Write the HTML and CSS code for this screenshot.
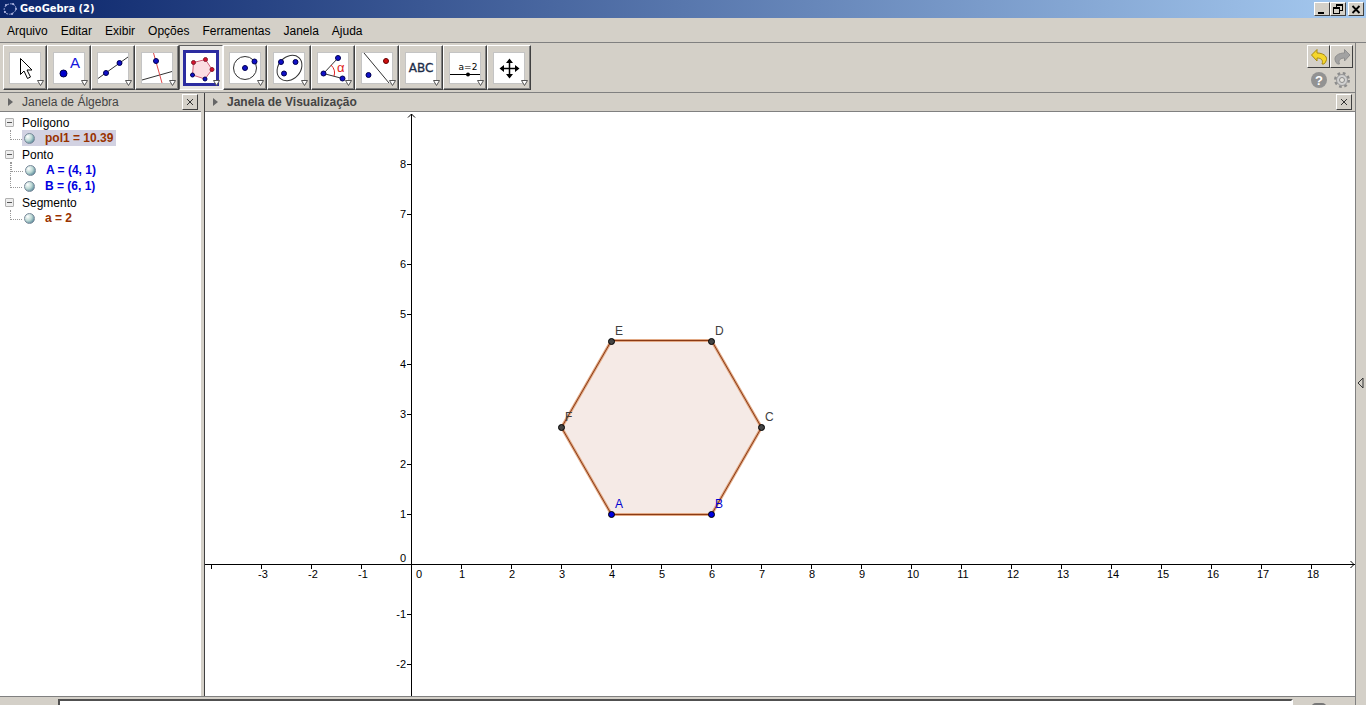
FILE: index.html
```html
<!DOCTYPE html>
<html lang="pt-BR">
<head>
<meta charset="utf-8">
<title>GeoGebra (2)</title>
<link rel="stylesheet" href="styles.css">
</head>
<body>
<header class="titlebar">
  <svg class="app-icon" width="16" height="16" viewBox="0 0 16 16" aria-hidden="true">
    <ellipse cx="8" cy="8" rx="6" ry="5" fill="none" stroke="#8f9ccc" stroke-dasharray="2 1" transform="rotate(-20 8 8)"/>
    <g fill="#b9bde8"><circle cx="4" cy="4" r="1"/><circle cx="11" cy="3" r="1"/><circle cx="14" cy="8" r="1"/><circle cx="10" cy="13" r="1"/><circle cx="3" cy="11" r="1"/></g>
  </svg>
  <h1 class="app-title">GeoGebra (2)</h1>
  <div class="window-buttons">
    <button class="win-btn" aria-label="Minimizar"><svg width="12" height="11" viewBox="0 0 12 11"><path d="M2 8h6v2H2z"/></svg></button>
    <button class="win-btn" aria-label="Restaurar"><svg width="12" height="11" viewBox="0 0 12 11"><path d="M4 0h7v7H8V6h2V2H5v1H4zM1 3h7v7H1zM2 5v4h5V5z" fill-rule="evenodd"/></svg></button>
    <button class="win-btn win-close" aria-label="Fechar"><svg width="12" height="11" viewBox="0 0 12 11"><path d="M2.500 2l7 7M9.500 2l-7 7" stroke="#000" stroke-width="1.800"/></svg></button>
  </div>
</header>
<nav class="menubar">
  <button class="menu">Arquivo</button>
  <button class="menu">Editar</button>
  <button class="menu">Exibir</button>
  <button class="menu">Opções</button>
  <button class="menu">Ferramentas</button>
  <button class="menu">Janela</button>
  <button class="menu">Ajuda</button>
</nav>
<div class="workspace">
  <main class="main">
    <div class="toolbar">
      <div class="tools">
        <button class="tool" aria-label="Mover"><svg class="tool-icon" viewBox="0 0 38 38">
          <rect class="tile" x="3.500" y="3.500" width="31" height="31"/>
          <path d="M14.500 9.500v16l3.500-3.500 3.500 7.500 3-1.500-3.500-7h5z" fill="#fff" stroke="#000"/>
          <path class="drop" d="M31.500 31.500h6l-3 5z"/></svg></button>
        <button class="tool" aria-label="Ponto"><svg class="tool-icon" viewBox="0 0 38 38">
          <rect class="tile" x="3.500" y="3.500" width="31" height="31"/>
          <circle cx="13.500" cy="24.500" r="3.500" fill="#00c" stroke="#004"/>
          <text x="20" y="19" class="tool-a">A</text>
          <path class="drop" d="M31.500 31.500h6l-3 5z"/></svg></button>
        <button class="tool" aria-label="Reta"><svg class="tool-icon" viewBox="0 0 38 38">
          <rect class="tile" x="3.500" y="3.500" width="31" height="31"/>
          <path d="M4 29.500L34 8" stroke="#333"/>
          <g class="blue-dot"><circle cx="12" cy="24" r="2.500"/><circle cx="25.500" cy="14" r="2.500"/></g>
          <path class="drop" d="M31.500 31.500h6l-3 5z"/></svg></button>
        <button class="tool" aria-label="Reta perpendicular"><svg class="tool-icon" viewBox="0 0 38 38">
          <rect class="tile" x="3.500" y="3.500" width="31" height="31"/>
          <path d="M4 31l30-8.500" stroke="#333"/><path d="M15.500 4l8.500 30" stroke="#e04848"/>
          <circle class="blue-dot" cx="18" cy="12" r="2.500"/>
          <path class="drop" d="M31.500 31.500h6l-3 5z"/></svg></button>
        <button class="tool tool-active" aria-label="Polígono" aria-pressed="true"><svg class="tool-icon" viewBox="0 0 38 38">
          <rect x="2.500" y="2.500" width="33" height="33" fill="#fff" stroke="#2c2ca0" stroke-width="3"/>
          <path d="M11.500 13.500L23.500 10.500 30 20.500 23 30 10.500 26z" fill="#fbdde2" stroke="#d06078"/>
          <g fill="#d8102c" stroke="#802030"><circle cx="11.500" cy="13.500" r="2"/><circle cx="23.500" cy="10.500" r="2"/><circle cx="30" cy="20.500" r="2"/></g>
          <g class="blue-dot"><circle cx="23" cy="30" r="2"/><circle cx="10.500" cy="26" r="2"/></g>
          <path class="drop" d="M31.500 31.500h6l-3 5z"/></svg></button>
        <button class="tool" aria-label="Círculo"><svg class="tool-icon" viewBox="0 0 38 38">
          <rect class="tile" x="3.500" y="3.500" width="31" height="31"/>
          <circle cx="19" cy="19" r="11.500" fill="none" stroke="#333"/>
          <g class="blue-dot"><circle cx="19" cy="19" r="2.500"/><circle cx="28.500" cy="12.500" r="2.500"/></g>
          <path class="drop" d="M31.500 31.500h6l-3 5z"/></svg></button>
        <button class="tool" aria-label="Elipse"><svg class="tool-icon" viewBox="0 0 38 38">
          <rect class="tile" x="3.500" y="3.500" width="31" height="31"/>
          <ellipse cx="19.500" cy="19" rx="14" ry="11" fill="none" stroke="#333" transform="rotate(-48 19.500 19)"/>
          <g class="blue-dot"><circle cx="11" cy="13" r="2.500"/><circle cx="25.500" cy="13" r="2.500"/><circle cx="14" cy="24.500" r="2.500"/></g>
          <path class="drop" d="M31.500 31.500h6l-3 5z"/></svg></button>
        <button class="tool" aria-label="Ângulo"><svg class="tool-icon" viewBox="0 0 38 38">
          <rect class="tile" x="3.500" y="3.500" width="31" height="31"/>
          <path d="M24 9L9.500 24.500 28.500 29.500" fill="none" stroke="#333"/>
          <path d="M17 16q5 5 3 11" fill="none" stroke="#e02020"/>
          <text x="23" y="23" class="tool-alpha">α</text>
          <g class="blue-dot"><circle cx="24" cy="9" r="2.500"/><circle cx="9.500" cy="24.500" r="2.500"/><circle cx="28.500" cy="29.500" r="2.500"/></g>
          <path class="drop" d="M31.500 31.500h6l-3 5z"/></svg></button>
        <button class="tool" aria-label="Reflexão"><svg class="tool-icon" viewBox="0 0 38 38">
          <rect class="tile" x="3.500" y="3.500" width="31" height="31"/>
          <path d="M6 4l25 30" stroke="#333"/>
          <circle cx="28" cy="12" r="2.500" fill="#d01010" stroke="#600"/><circle class="blue-dot" cx="10.500" cy="26" r="2.500"/>
          <path class="drop" d="M31.500 31.500h6l-3 5z"/></svg></button>
        <button class="tool" aria-label="Texto"><svg class="tool-icon" viewBox="0 0 38 38">
          <rect class="tile" x="3.500" y="3.500" width="31" height="31"/>
          <text x="19" y="23" class="tool-abc">ABC</text>
          <path class="drop" d="M31.500 31.500h6l-3 5z"/></svg></button>
        <button class="tool" aria-label="Controle deslizante"><svg class="tool-icon" viewBox="0 0 38 38">
          <rect class="tile" x="3.500" y="3.500" width="31" height="31"/>
          <text x="22" y="21" class="tool-slider">a=2</text>
          <path d="M4 25.500h30" stroke="#000"/><circle cx="22" cy="25.500" r="2"/>
          <path class="drop" d="M31.500 31.500h6l-3 5z"/></svg></button>
        <button class="tool" aria-label="Mover janela de visualização"><svg class="tool-icon" viewBox="0 0 38 38">
          <rect class="tile" x="3.500" y="3.500" width="31" height="31"/>
          <path d="M19.500 11v17M11 19.500h17" stroke="#000" stroke-width="1.500"/>
          <path d="M19.500 9.500l3.500 4.500h-7zM19.500 29.500l3.500-4.500h-7zM9.500 19.500l4.500-3.500v7zM29.500 19.500l-4.500-3.500v7z"/>
          <path class="drop" d="M31.500 31.500h6l-3 5z"/></svg></button>
      </div>
      <div class="actions">
        <button class="action" aria-label="Desfazer"><svg width="18" height="18" viewBox="0 0 18 18"><path d="M1.500 7L7 1.500V5c6 0 10 3 9.500 6.500-.3 2-1.500 3.500-2.500 4.500h-2c1.500-4-1-6-5-6v3z" fill="#f5d62c" stroke="#a88a10"/></svg></button>
        <button class="action" aria-label="Refazer"><svg width="18" height="18" viewBox="0 0 18 18"><path d="M17 7L11.500 1.500V5C5.500 5 1.500 8 2 11.500c.3 2 1.500 3.500 2.500 4.500h2C5 12 7.500 10 11.500 10v3z" fill="#a2a2a2" stroke="#8e8e8e"/></svg></button>
        <button class="action action-flat" aria-label="Ajuda"><svg width="18" height="18" viewBox="0 0 18 18"><circle cx="9" cy="9" r="8" fill="#929292"/><text x="9" y="14" class="help-mark">?</text></svg></button>
        <button class="action action-flat" aria-label="Preferências"><svg width="18" height="18" viewBox="0 0 18 18"><circle cx="9" cy="9" r="6.500" fill="none" stroke="#8c8c8c" stroke-width="3" stroke-dasharray="2.600 2.500"/><circle cx="9" cy="9" r="5.500" fill="#d0d0d0" stroke="#9a9a9a"/><circle cx="9" cy="9" r="2.500" fill="#e4e2dc" stroke="#8c8c8c"/></svg></button>
      </div>
    </div>
    <div class="views">
      <section class="view algebra">
        <header class="view-head">
          <svg class="expander" width="5" height="8" viewBox="0 0 5 8"><path d="M0 0l5 4-5 4z"/></svg>
          <h2 class="view-title">Janela de Álgebra</h2>
          <button class="view-close" aria-label="Fechar"><svg width="8" height="8" viewBox="0 0 8 8"><path d="M1 1l6 6M7 1L1 7"/></svg></button>
        </header>
        <ul class="tree">
          <li><button class="group"><span class="toggle"></span>Polígono</button>
            <ul class="leaves"><li class="leaf"><button class="object selected brown"><span class="ball"></span>pol1 = 10.39</button></li></ul></li>
          <li><button class="group"><span class="toggle"></span>Ponto</button>
            <ul class="leaves"><li class="leaf"><button class="object blue"><span class="ball"></span>A = (4, 1)</button></li>
            <li class="leaf"><button class="object blue"><span class="ball"></span>B = (6, 1)</button></li></ul></li>
          <li><button class="group"><span class="toggle"></span>Segmento</button>
            <ul class="leaves"><li class="leaf"><button class="object brown"><span class="ball"></span>a = 2</button></li></ul></li>
        </ul>
      </section>
      <section class="view graphics">
        <header class="view-head">
          <svg class="expander" width="5" height="8" viewBox="0 0 5 8"><path d="M0 0l5 4-5 4z"/></svg>
          <h2 class="view-title view-title-active">Janela de Visualização</h2>
          <button class="view-close" aria-label="Fechar"><svg width="8" height="8" viewBox="0 0 8 8"><path d="M1 1l6 6M7 1L1 7"/></svg></button>
        </header>
        <div class="plot">
        <svg class="canvas" role="img" aria-label="Hexágono regular ABCDEF">
          <g class="axes">
            <line x1="0" y1="452.500" x2="100%" y2="452.500"/>
            <line x1="206.500" y1="2" x2="206.500" y2="100%"/>
            <path d="M203 5.500l3.500-3.500 3.500 3.500"/>
            <svg x="100%" y="452" overflow="visible"><path d="M-4.500-3L-1 .5-4.500 4"/></svg>
            <path d="M6.500 453v4m50-4v4m50-4v4m50-4v4m100-4v4m50-4v4m50-4v4m50-4v4m50-4v4m50-4v4m50-4v4m50-4v4m50-4v4m50-4v4m50-4v4m50-4v4m50-4v4m50-4v4m50-4v4m50-4v4m50-4v4m50-4v4"/>
            <path d="M202 52.500h4m-4 50h4m-4 50h4m-4 50h4m-4 50h4m-4 50h4m-4 50h4m-4 50h4m-4 100h4m-4 50h4"/>
          </g>
          <g class="x-labels">
            <text x="58" y="466">-3</text><text x="108" y="466">-2</text><text x="158" y="466">-1</text><text x="214" y="466">0</text>
            <text x="257" y="466">1</text><text x="307" y="466">2</text><text x="357" y="466">3</text><text x="407" y="466">4</text><text x="457" y="466">5</text><text x="507" y="466">6</text><text x="557" y="466">7</text><text x="607" y="466">8</text><text x="657" y="466">9</text>
            <text x="708" y="466">10</text><text x="758" y="466">11</text><text x="808" y="466">12</text><text x="858" y="466">13</text><text x="908" y="466">14</text><text x="958" y="466">15</text><text x="1008" y="466">16</text><text x="1058" y="466">17</text><text x="1108" y="466">18</text>
          </g>
          <g class="y-labels">
            <text x="201" y="56">8</text><text x="201" y="106">7</text><text x="201" y="156">6</text><text x="201" y="206">5</text><text x="201" y="256">4</text><text x="201" y="306">3</text><text x="201" y="356">2</text><text x="201" y="406">1</text><text x="201" y="450">0</text><text x="201" y="506">-1</text><text x="201" y="556">-2</text>
          </g>
          <path class="hexagon-halo" d="M406.500 402.500h100l50-87-50-87h-100l-50 87z"/>
          <path class="hexagon-edge" d="M406.500 402.500h100l50-87-50-87h-100l-50 87z"/>
          <g class="derived"><circle cx="556.500" cy="315.500" r="3"/><circle cx="506.500" cy="229.500" r="3"/><circle cx="406.500" cy="229.500" r="3"/><circle cx="356.500" cy="315.500" r="3"/></g>
          <g class="free"><circle cx="406.500" cy="402.500" r="3"/><circle cx="506.500" cy="402.500" r="3"/></g>
          <g class="point-labels">
            <text x="410" y="223">E</text><text x="510" y="223">D</text><text x="560" y="309">C</text><text x="360" y="309">F</text>
          </g>
          <g class="point-labels free-labels"><text x="410" y="396">A</text><text x="510" y="396">B</text></g>
        </svg>
        </div>
      </section>
    </div>
    <footer class="inputbar">
      <input class="command" type="text" aria-label="Entrada">
      <button class="input-help" aria-label="Ajuda de comandos"></button>
    </footer>
  </main>
  <aside class="sidebar">
    <button class="sidebar-open" aria-label="Abrir painel"><svg width="7" height="12" viewBox="0 0 7 12"><path d="M6 1v10L1 6z" fill="none" stroke="#333"/></svg></button>
  </aside>
</div>
</body>
</html>
```
FILE: styles.css
```css
* { box-sizing: border-box; }

body {
  display: flex;
  flex-direction: column;
  height: 100vh;
  margin: 0;
  overflow: hidden;
  background: #d4d0c8;
  color: #000;
  font: 12px/16px "Liberation Sans", Arial, sans-serif;
}

button {
  margin: 0;
  padding: 0;
  border: 0;
  background: none;
  color: inherit;
  font: inherit;
}

h1, h2, ul { margin: 0; padding: 0; }
ul { list-style: none; }
svg { display: block; }

/* Title bar */
.titlebar {
  display: flex;
  align-items: center;
  flex: none;
  height: 18px;
  padding: 0 2px;
  background: linear-gradient(to right, #0a246a, #a6caf0);
}
.app-title {
  flex: 1;
  padding-left: 2px;
  color: #fff;
  font: bold 11px/16px "DejaVu Sans Condensed", "Noto Sans", sans-serif;
}
.window-buttons { display: flex; }
.win-btn {
  display: flex;
  width: 16px;
  height: 14px;
  padding: 1px;
  border: 1px solid;
  border-color: #fff #404040 #404040 #fff;
  background: #d4d0c8;
}
.win-close { margin-left: 2px; }

/* Menu bar */
.menubar {
  display: flex;
  align-items: center;
  flex: none;
  gap: 13px;
  height: 25px;
  padding: 1px 7px 0;
  border-bottom: 1px solid #808080;
}

.workspace { display: flex; flex: 1; min-height: 0; }
.main { display: flex; flex: 1; flex-direction: column; min-width: 0; }

/* Toolbar */
.toolbar {
  display: flex;
  justify-content: space-between;
  flex: none;
  height: 50px;
  padding: 2px 2px 0 3px;
  border-bottom: 1px solid #808080;
}
.tools { display: flex; }
.tool {
  width: 44px;
  height: 45px;
  padding: 2px;
  border: 1px solid;
  border-color: #fff #404040 #404040 #fff;
  box-shadow: inset -1px -1px #808080;
}
.tool-active {
  border-color: #606060 #fff #fff #606060;
  box-shadow: none;
  background: #e9e7e3;
}
.tool-icon { width: 38px; height: 38px; }
.tile { fill: #fff; stroke: #c4c4c4; }
.drop { fill: #fff; stroke: #555; }
.blue-dot { fill: #1010c8; stroke: #000050; }
.tool-a { fill: #1414dc; font-size: 15px; }
.tool-alpha { fill: #e02020; font-size: 13px; }
.tool-abc { fill: #1c2c48; stroke: #1c2c48; stroke-width: 0.3px; font: 12px "DejaVu Sans", sans-serif; text-anchor: middle; }
.tool-slider { font: 9px "DejaVu Sans", sans-serif; text-anchor: middle; }

.actions {
  display: grid;
  grid-template-columns: 23px 23px;
  grid-template-rows: 23px 23px;
}
.action {
  display: grid;
  place-items: center;
  border: 1px solid;
  border-color: #fff #404040 #404040 #fff;
}
.action-flat { border-color: transparent; }
.help-mark { fill: #fff; font-size: 13px; font-weight: bold; text-anchor: middle; }

/* Views */
.views { display: flex; flex: 1; gap: 3px; min-height: 0; }
.view { display: flex; flex-direction: column; min-width: 0; background: #fff; }
.algebra { flex: 0 0 201px; }
.graphics { flex: 1; border-left: 1px solid #404040; }
.view-head {
  display: flex;
  align-items: center;
  flex: none;
  height: 19px;
  padding: 0 3px 0 8px;
  border-bottom: 1px solid #808080;
  background: #d4d0c8;
}
.expander { fill: #666; }
.view-title {
  flex: 1;
  padding-left: 9px;
  color: #444;
  font-size: 12px;
  font-weight: normal;
}
.view-title-active { font-weight: bold; }
.view-close {
  display: grid;
  place-items: center;
  width: 16px;
  height: 16px;
  border: 1px solid;
  border-color: #fff #404040 #404040 #fff;
}
.view-close svg { fill: none; stroke: #333; }

/* Algebra tree */
.tree { padding: 2px 0 0 5px; }
.group { display: flex; align-items: center; gap: 8px; height: 16px; padding-top: 1px; }
.toggle {
  width: 9px;
  height: 9px;
  border: 1px solid #b0b0b0;
  border-radius: 1px;
  background: linear-gradient(#555, #555) center / 5px 1px no-repeat, #eee;
}
.leaves { padding-left: 5px; }
.leaf { display: flex; height: 16px; }
.leaf::before {
  width: 11px;
  height: 9px;
  border: dotted #999;
  border-width: 0 0 1px 1px;
  content: "";
}
.leaf:not(:last-child)::after {
  order: -1;
  width: 1px;
  margin-right: -1px;
  border-left: 1px dotted #999;
  content: "";
}
.object {
  display: flex;
  align-items: center;
  gap: 10px;
  height: 16px;
  padding: 0 3px 0 2px;
  font-weight: bold;
}
.selected { background: #d2d2e2; }
.brown { color: #993300; }
.blue { color: #0000e0; }
.ball {
  width: 11px;
  height: 11px;
  border: 1px solid #789;
  border-radius: 50%;
  background: radial-gradient(circle at 30% 30%, #fff, #bcd8d4 45%, #2c6680);
}

/* Plot */
.plot { flex: 1; min-height: 0; }
.canvas { width: 100%; height: 100%; overflow: hidden; }
.axes { fill: none; stroke: #000; }
.x-labels, .y-labels { font-size: 11px; }
.x-labels { text-anchor: middle; }
.y-labels { text-anchor: end; }
.point-labels { fill: #404040; font-size: 12px; }
.free-labels { fill: #0000d0; }
.hexagon-halo { fill: #f5eae6; stroke: #e2a985; stroke-width: 3; }
.hexagon-edge { fill: none; stroke: #8a3a14; }
.derived { fill: #444; stroke: #000; }
.free { fill: #0000e0; stroke: #000; }

/* Input bar */
.inputbar {
  display: flex;
  align-items: flex-start;
  flex: none;
  gap: 18px;
  height: 9px;
  padding: 2px 28px 0 58px;
  border-top: 1px solid #808080;
  overflow: hidden;
}
.command {
  flex: 1;
  min-width: 0;
  height: 22px;
  border: 2px solid;
  border-color: #505050 #fff #fff #505050;
  background: #fff;
}
.input-help {
  width: 16px;
  height: 16px;
  margin-top: 4px;
  border-radius: 5px;
  background: #777;
}

/* Side strip */
.sidebar {
  display: flex;
  align-items: center;
  flex: none;
  width: 11px;
  padding-left: 1px;
  border-left: 1px solid #808080;
}
.sidebar-open { margin-top: 18px; }
```
